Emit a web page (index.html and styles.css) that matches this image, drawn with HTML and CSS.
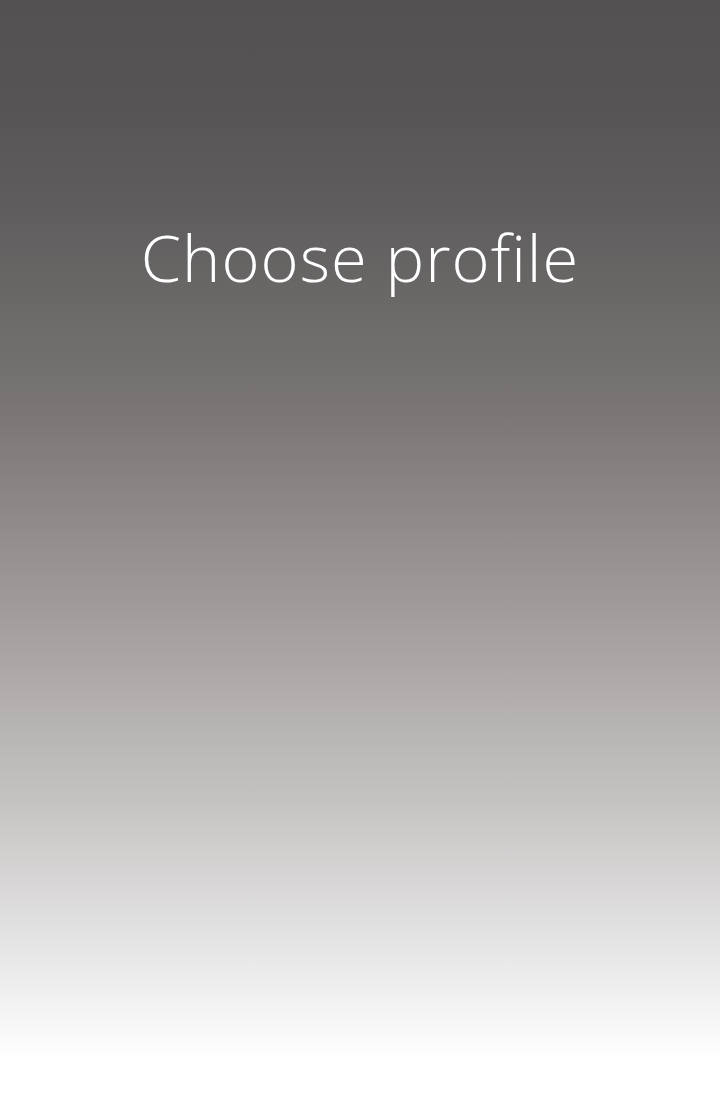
FILE: index.html
```html
<!DOCTYPE html>
<html lang="en">
<head>
<meta charset="utf-8">
<title>Choose profile</title>
<link rel="stylesheet" href="styles.css">
</head>
<body>
<main class="screen">
  <h1 class="title">Choose profile</h1>
</main>
</body>
</html>
```
FILE: styles.css
```css
html, body {
  margin: 0;
  padding: 0;
  background: #ffffff;
}
.screen {
  height: 1060px;
  display: flex;
  flex-direction: column;
  align-items: center;
  background: linear-gradient(to bottom,
    #535152 0px,
    #565455 100px,
    #5e5c5c 200px,
    #777473 400px,
    #9e9a99 600px,
    #c5c3c2 800px,
    #e7e6e6 950px,
    #ffffff 1060px);
}
.title {
  margin: 0;
  padding-top: 212px;
  font-family: "Open Sans", "Noto Sans", sans-serif;
  font-weight: 300;
  font-size: 65px;
  line-height: 90px;
  color: #ffffff;
  letter-spacing: 1px;
}
```
